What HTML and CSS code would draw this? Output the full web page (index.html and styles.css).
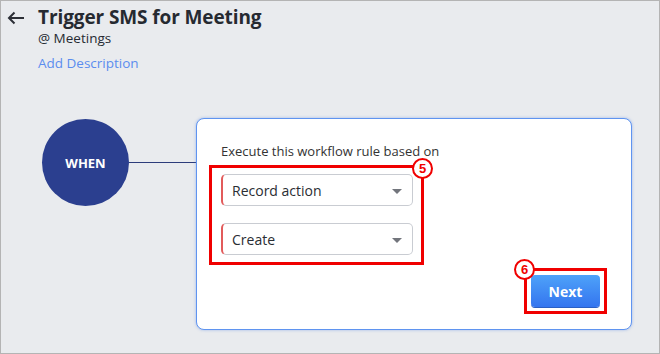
FILE: index.html
```html
<!DOCTYPE html>
<html lang="en">
  <head>
    <meta charset="UTF-8" />
    <meta name="viewport" content="width=device-width, initial-scale=1.0" />
    <title>Trigger SMS for Meeting</title>
    <link rel="stylesheet" href="styles.css">
  </head>
  <body>
    <div class="frame">
      <header class="rule-header">
        <button class="back-btn" aria-label="Back">
          <svg width="18" height="14" viewBox="0 0 18 14">
            <path d="M17 7H2M7.5 1.5L2 7l5.5 5.5" fill="none" stroke="#2c2f36" stroke-width="2" />
          </svg>
        </button>
        <div class="rule-info">
          <h1 class="rule-title">Trigger SMS for Meeting</h1>
          <p class="rule-module">@ Meetings</p>
          <a class="add-desc" href="#">Add Description</a>
        </div>
      </header>

      <div class="flow">
        <div class="when-node">WHEN</div>
        <div class="connector"></div>

        <div class="rule-card">
          <p class="card-label">Execute this workflow rule based on</p>

          <div class="mark mark-select">
            <span class="step">5</span>
            <div class="select">
              <span>Record action</span>
              <i class="caret"></i>
            </div>
            <div class="select">
              <span>Create</span>
              <i class="caret"></i>
            </div>
          </div>

          <div class="card-footer">
            <div class="mark mark-next">
              <span class="step">6</span>
              <button class="next-btn">Next</button>
            </div>
          </div>
        </div>
      </div>
    </div>
  </body>
</html>
```

FILE: styles.css
```css
:root {
  --bg: #e9ebee;
  --ink: #262a31;
  --mark: #f00000;
  --node: #2b3f8f;
}

* {
  margin: 0;
  padding: 0;
  box-sizing: border-box;
}

body {
  font-family: "Open Sans", "Liberation Sans", sans-serif;
  color: var(--ink);
  background: #fff;
}

.frame {
  width: 660px;
  height: 354px;
  border: 1px solid #b4b4b4;
  background: var(--bg);
  overflow: hidden;
}

/* header */
.rule-header {
  display: flex;
  align-items: flex-start;
  padding: 4px 0 0 6px;
}

.back-btn {
  border: none;
  background: none;
  width: 18px;
  height: 14px;
  margin-top: 6px;
  margin-right: 13px;
  display: flex;
}

.rule-title {
  font-size: 19px;
  font-weight: 700;
  line-height: 24px;
  letter-spacing: -0.1px;
}

.rule-module {
  font-size: 13.5px;
  line-height: 18px;
}

.add-desc {
  display: inline-block;
  margin-top: 7px;
  font-size: 13.5px;
  line-height: 18px;
  color: #5b8def;
  text-decoration: none;
}

/* flow */
.flow {
  display: flex;
  align-items: flex-start;
  padding-left: 41px;
  margin-top: 45px;
}

.when-node {
  width: 87px;
  height: 87px;
  margin-top: 1px;
  border-radius: 50%;
  background: var(--node);
  color: #fff;
  font-size: 13px;
  font-weight: 700;
  display: flex;
  align-items: center;
  justify-content: center;
  flex-shrink: 0;
}

.connector {
  width: 67px;
  height: 1px;
  margin-top: 44px;
  background: #2c3c7a;
  flex-shrink: 0;
}

.rule-card {
  width: 436px;
  height: 212px;
  background: #fff;
  border: 1px solid #5f94f0;
  border-radius: 8px;
  box-shadow: 0 0 3px rgba(80, 130, 230, 0.5);
  padding: 22px 0 0 12px;
}

.card-label {
  font-size: 13px;
  line-height: 20px;
  padding-left: 12px;
  color: #333;
}

.mark {
  position: relative;
  border: 3px solid var(--mark);
}

.mark-select {
  width: 215px;
  margin-top: 4px;
  padding: 6px 8px 7px 9px;
}

.step {
  position: absolute;
  width: 21px;
  height: 21px;
  border: 2.5px solid var(--mark);
  border-radius: 50%;
  background: #fff;
  color: var(--mark);
  font-family: "Liberation Sans", sans-serif;
  font-size: 13px;
  font-weight: 700;
  display: flex;
  align-items: center;
  justify-content: center;
}

.mark-select .step {
  top: -10px;
  right: -12px;
}

.select {
  height: 32px;
  border: 1px solid #c9ccd2;
  border-left: 2px solid #e25b5b;
  border-radius: 5px;
  display: flex;
  align-items: center;
  justify-content: space-between;
  padding: 0 10px 0 9px;
  font-size: 14px;
  color: #2a2d33;
}

.select + .select {
  margin-top: 17px;
}

.caret {
  width: 0;
  height: 0;
  border-left: 5px solid transparent;
  border-right: 5px solid transparent;
  border-top: 5px solid #72757c;
  margin-top: 2px;
}

.card-footer {
  display: flex;
  justify-content: flex-end;
  padding-right: 24px;
  margin-top: 3px;
}

.mark-next {
  padding: 4px;
}

.mark-next .step {
  top: -12px;
  left: -13px;
}

.next-btn {
  width: 69px;
  height: 32px;
  border: none;
  border-radius: 4px;
  background: linear-gradient(#4ea2f9, #3475ef);
  box-shadow: 0 1px 0 #2a5fc4;
  color: #fff;
  font-family: "Open Sans", "Liberation Sans", sans-serif;
  font-size: 14px;
  font-weight: 700;
}
```
